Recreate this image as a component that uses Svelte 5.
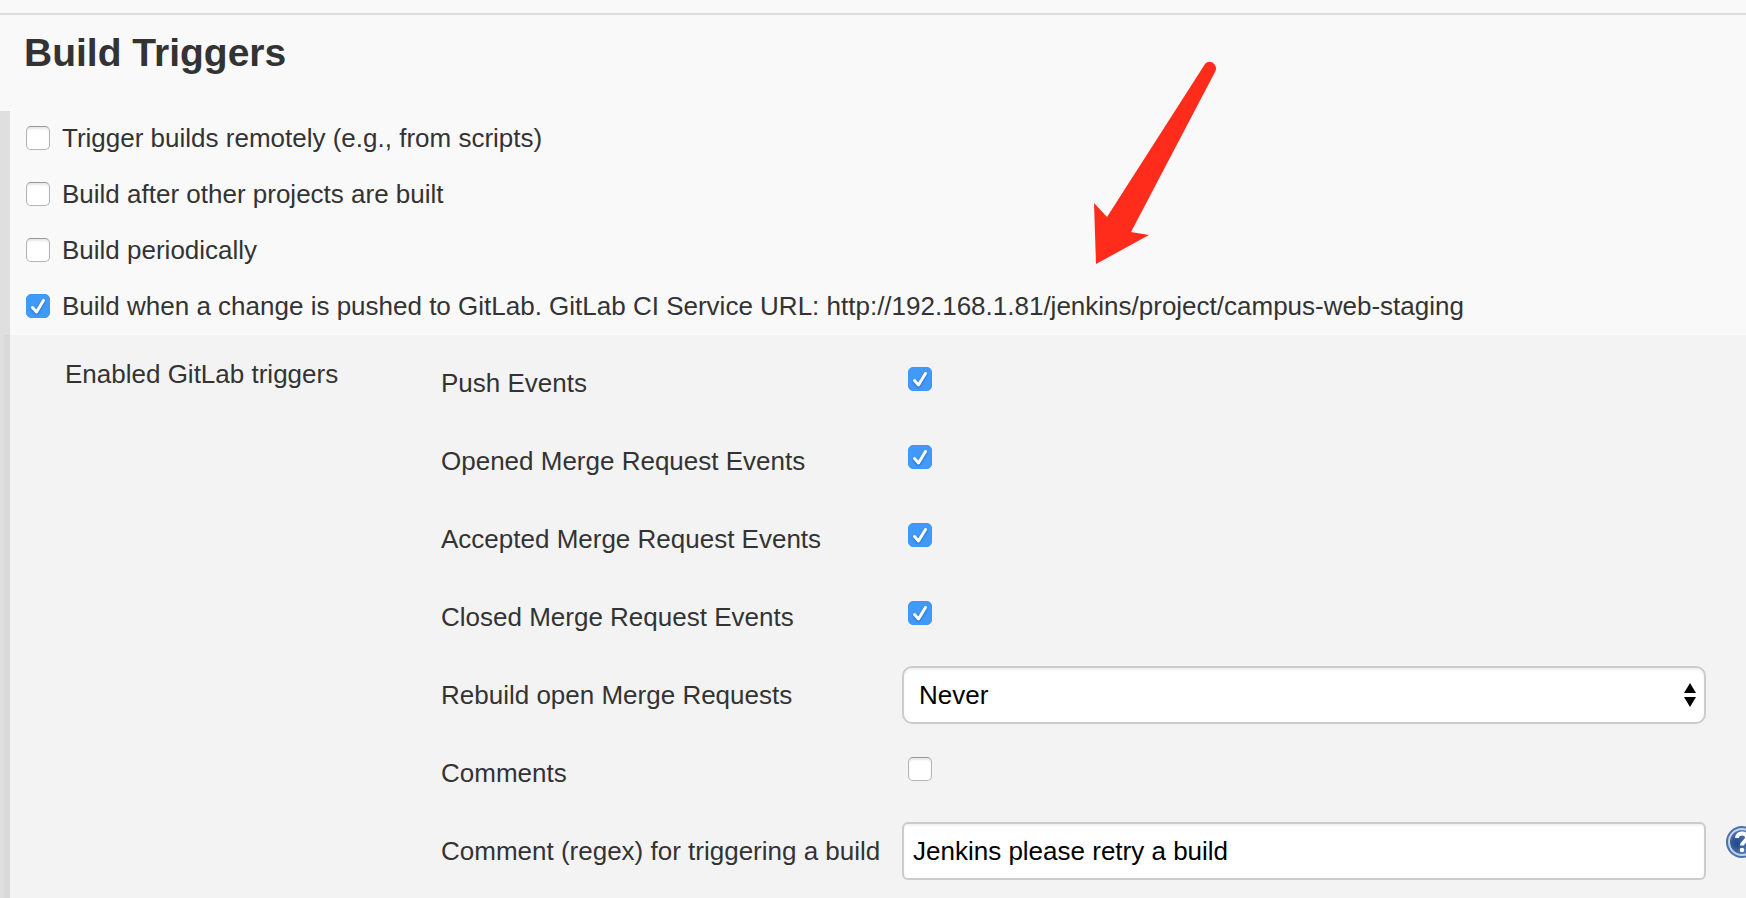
<script lang="ts">
  interface Trigger {
    id: string;
    label: string;
    checked: boolean;
  }

  interface Field {
    id: string;
    label: string;
    type: "checkbox" | "select" | "text";
    help?: boolean;
  }

  let triggers: Trigger[] = $state([
    { id: "remote", label: "Trigger builds remotely (e.g., from scripts)", checked: false },
    { id: "upstream", label: "Build after other projects are built", checked: false },
    { id: "periodic", label: "Build periodically", checked: false },
    {
      id: "gitlab",
      label:
        "Build when a change is pushed to GitLab. GitLab CI Service URL: http://192.168.1.81/jenkins/project/campus-web-staging",
      checked: true,
    },
  ]);

  const fields: Field[] = [
    { id: "push", label: "Push Events", type: "checkbox" },
    { id: "opened", label: "Opened Merge Request Events", type: "checkbox" },
    { id: "accepted", label: "Accepted Merge Request Events", type: "checkbox" },
    { id: "closed", label: "Closed Merge Request Events", type: "checkbox" },
    { id: "rebuild", label: "Rebuild open Merge Requests", type: "select" },
    { id: "comments", label: "Comments", type: "checkbox" },
    { id: "regex", label: "Comment (regex) for triggering a build", type: "text", help: true },
  ];

  let events: Record<string, boolean> = $state({
    push: true,
    opened: true,
    accepted: true,
    closed: true,
    comments: false,
  });
  let rebuild = $state("never");
  let regex = $state("Jenkins please retry a build");
</script>

{#snippet tick()}
  <svg class="tick" viewBox="0 0 24 24" aria-hidden="true">
    <path d="M6.5 13.5 10.5 18 17.5 6.5" />
  </svg>
{/snippet}

<main>
  <h1>Build Triggers</h1>

  <section class="body">
    {#each triggers as trigger (trigger.id)}
      <label class="trigger">
        <span class="check">
          <input type="checkbox" bind:checked={trigger.checked} />
          {@render tick()}
        </span>
        {trigger.label}
      </label>
    {/each}

    <fieldset class="nested" aria-labelledby="nested-title">
      <div class="title" id="nested-title">Enabled GitLab triggers</div>
      <div class="fields">
        {#each fields as field (field.id)}
          <div class="field">
            <label class="name" for={field.id}>{field.label}</label>
            <div class="control">
              {#if field.type === "checkbox"}
                <span class="check">
                  <input id={field.id} type="checkbox" bind:checked={events[field.id]} />
                  {@render tick()}
                </span>
              {:else if field.type === "select"}
                <select id={field.id} bind:value={rebuild}>
                  <option value="never">Never</option>
                  <option value="source">On push to source branch</option>
                  <option value="both">On push to source or target branch</option>
                </select>
                <svg class="arrows" viewBox="0 0 12 24" aria-hidden="true">
                  <path d="M6 0 12 10H0zM6 24 0 14h12z" />
                </svg>
              {:else}
                <input id={field.id} type="text" bind:value={regex} />
              {/if}
            </div>
            <div class="side">
              {#if field.help}
                <button class="help" type="button" aria-label="Help for feature: {field.label}">
                  <svg viewBox="0 0 32 32" aria-hidden="true">
                    <defs>
                      <radialGradient id="help-fill" cx="30%" cy="55%" r="75%">
                        <stop offset="0" stop-color="#1f4787" />
                        <stop offset="1" stop-color="#6f93c8" />
                      </radialGradient>
                    </defs>
                    <circle cx="16" cy="16" r="16" fill="#4a71ad" />
                    <circle cx="16" cy="16" r="13" fill="url(#help-fill)" stroke="#c3d2e8" stroke-width="2" />
                    <path
                      d="M11 12c0-6 10-6 10-.5 0 4-5 4-5 8"
                      fill="none"
                      stroke="#fff"
                      stroke-width="4" />
                    <circle cx="16" cy="24" r="2.3" fill="#fff" />
                  </svg>
                </button>
              {/if}
            </div>
          </div>
        {/each}
      </div>
    </fieldset>
  </section>

  <svg class="pointer" viewBox="0 0 124 206" aria-hidden="true">
    <path d="M111 3C116-3 125 4 121 11L37 171 55 174 2 203 0 142 13 156Z" />
  </svg>
</main>

<style>
  :global(body) {
    margin: 0;
    background: #f9f9f9;
  }
  main {
    position: relative;
    display: flex;
    flex-direction: column;
    box-sizing: border-box;
    min-height: 100vh;
    padding-top: 13px;
    overflow: hidden;
    color: #333;
    font-family: Helvetica, "Liberation Sans", Arial, sans-serif;
    font-size: 26px;
    line-height: 32px;
  }
  h1 {
    margin: 0;
    border-top: 2px solid #ddd;
    padding: 14px 24px 34px;
    font-size: 39px;
    line-height: 48px;
  }
  .body {
    flex: 1;
    display: flex;
    flex-direction: column;
    border-left: 10px solid #dfdfdf;
  }
  .trigger {
    display: flex;
    align-items: center;
    gap: 12px;
    box-sizing: border-box;
    height: 56px;
    padding: 0 0 2px 16px;
    white-space: nowrap;
  }
  .check {
    position: relative;
    display: flex;
    flex: none;
    width: 24px;
    height: 24px;
  }
  .check input {
    appearance: none;
    box-sizing: border-box;
    width: 24px;
    height: 24px;
    margin: 0;
    border: 1px solid #b4b4b4;
    border-top-color: #999;
    border-radius: 5px;
    background: #fff;
    box-shadow: inset 0 2px 2px #e8e8e8;
  }
  .check input:checked {
    border-color: #3d97f7;
    background: #4199fa;
    box-shadow: none;
  }
  .tick {
    position: absolute;
    inset: 0;
    display: none;
    fill: none;
    stroke: #fff;
    stroke-width: 3;
    stroke-linecap: round;
    stroke-linejoin: round;
    filter: drop-shadow(0 1px 1px #2468b8);
    pointer-events: none;
  }
  input:checked + .tick {
    display: block;
  }
  /* the tint also covers part of the section's left rule */
  .nested {
    flex: 1;
    display: flex;
    min-width: 0;
    margin: 0 0 0 -6px;
    border: 0;
    padding: 9px 0 6px 61px;
    background: rgba(0, 0, 0, 0.024);
  }
  .title {
    flex: none;
    width: 376px;
    padding-top: 14px;
  }
  .fields {
    flex: 1;
    min-width: 0;
  }
  .field {
    display: flex;
    align-items: center;
    height: 78px;
  }
  .name {
    flex: none;
    width: 461px;
    white-space: nowrap;
  }
  .control {
    position: relative;
    flex: 1;
    min-width: 0;
  }
  .control .check {
    margin: 0 0 8px 6px;
  }
  select,
  input[type="text"] {
    display: block;
    box-sizing: border-box;
    width: 100%;
    height: 58px;
    margin: 0;
    border: 2px solid #ccc;
    border-radius: 6px;
    padding: 0 9px;
    background: #fff;
    box-shadow: inset 0 2px 2px #f2f2f2;
    color: #000;
    font: inherit;
  }
  select {
    appearance: none;
    border-radius: 10px;
    padding: 0 40px 0 15px;
  }
  .arrows {
    position: absolute;
    top: 17px;
    right: 10px;
    width: 12px;
    height: 24px;
    pointer-events: none;
  }
  .side {
    flex: none;
    width: 40px;
    height: 50px;
  }
  .help {
    display: block;
    width: 32px;
    height: 32px;
    margin-left: 20px;
    border: 0;
    padding: 0;
    background: none;
  }
  .help svg {
    display: block;
    width: 32px;
    height: 32px;
  }
  .pointer {
    position: absolute;
    top: 61px;
    left: 1094px;
    width: 124px;
    height: 206px;
    fill: #ff2c1c;
    pointer-events: none;
  }
</style>
